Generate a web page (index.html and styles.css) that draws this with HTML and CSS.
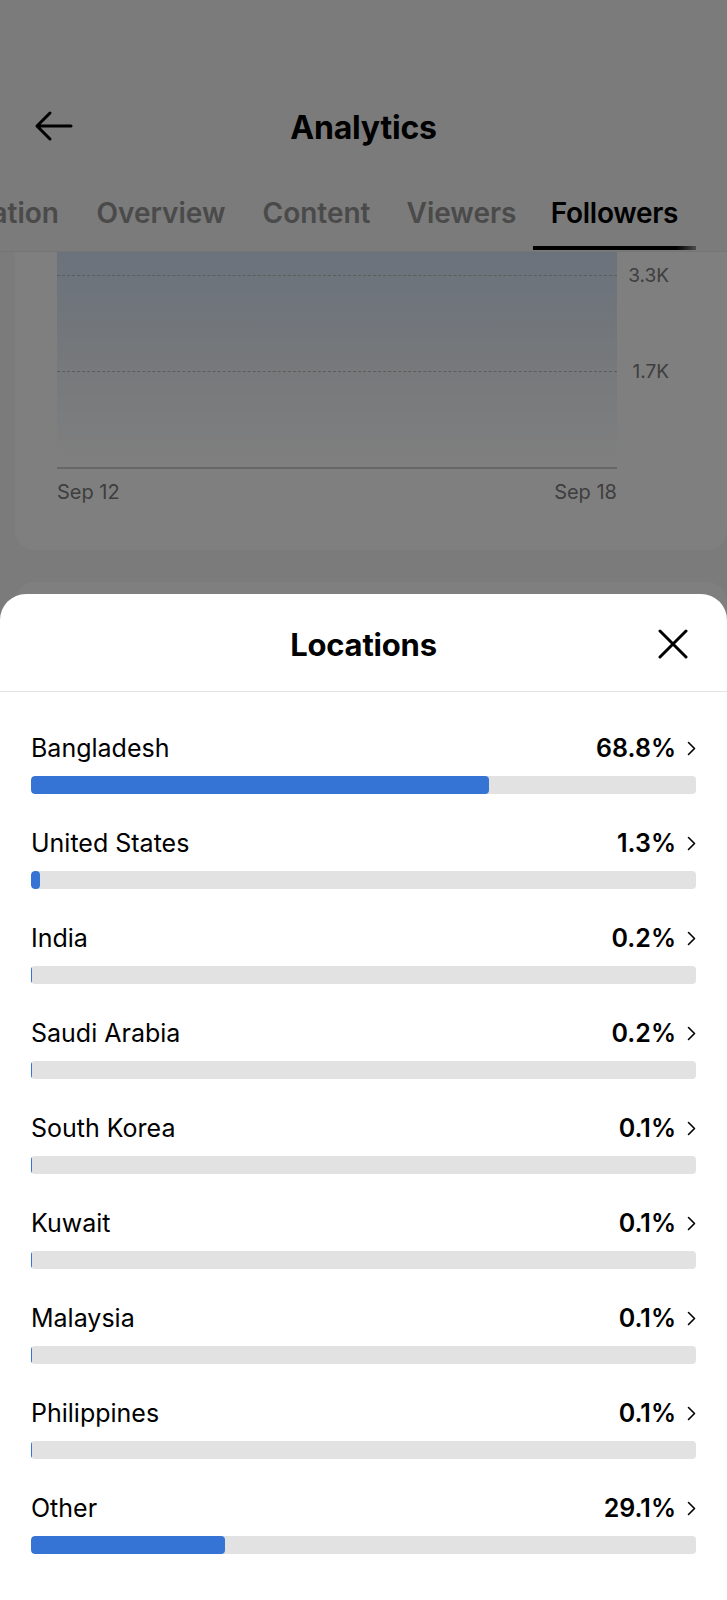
FILE: index.html
```html
<!DOCTYPE html>
<html lang="en">
<head>
  <meta charset="UTF-8" />
  <meta name="viewport" content="width=device-width, initial-scale=1.0" />
  <title>Analytics - Locations</title>
  <link rel="stylesheet" href="styles.css">
</head>
<body>
  <div class="page">
    <div class="status"></div>

    <header class="topbar">
      <svg class="back" width="40" height="32" viewBox="0 0 40 32" fill="none" stroke="#000" stroke-width="3" stroke-linecap="round" stroke-linejoin="round">
        <path d="M38 16H4M17 3L4 16l13 13" />
      </svg>
      <h1>Analytics</h1>
    </header>

    <nav class="tabs">
      <div class="tabs-inner">
        <a class="tab first">Inspiration</a>
        <a class="tab w-overview">Overview</a>
        <a class="tab w-content">Content</a>
        <a class="tab w-viewers">Viewers</a>
        <a class="tab w-followers active">Followers</a>
      </div>
    </nav>

    <section class="card chart-card">
      <div class="chart">
        <div class="plot">
          <div class="gridline g1"></div>
          <div class="gridline g2"></div>
        </div>
        <div class="y-axis">
          <span class="ylabel y1">3.3K</span>
          <span class="ylabel y2">1.7K</span>
        </div>
      </div>
      <div class="x-axis">
        <span>Sep 12</span>
        <span>Sep 18</span>
      </div>
    </section>

    <section class="card next-card"></section>
  </div>

  <div class="scrim"></div>

  <div class="sheet">
    <div class="sheet-head">
      <h2>Locations</h2>
      <svg class="close" width="30" height="30" viewBox="0 0 30 30" fill="none" stroke="#000" stroke-width="3" stroke-linecap="round">
        <path d="M2 2l26 26M28 2L2 28" />
      </svg>
    </div>

    <ul class="locations">
      <li class="loc">
        <div class="loc-row"><span class="name">Bangladesh</span><span class="pct">68.8%<svg class="chev" width="9" height="15" viewBox="0 0 9 15"><path d="M1.5 1.5l6 6-6 6" /></svg></span></div>
        <div class="track"><div class="fill" style="width: 68.8%"></div></div>
      </li>
      <li class="loc">
        <div class="loc-row"><span class="name">United States</span><span class="pct">1.3%<svg class="chev" width="9" height="15" viewBox="0 0 9 15"><path d="M1.5 1.5l6 6-6 6" /></svg></span></div>
        <div class="track"><div class="fill" style="width: 1.3%"></div></div>
      </li>
      <li class="loc">
        <div class="loc-row"><span class="name">India</span><span class="pct">0.2%<svg class="chev" width="9" height="15" viewBox="0 0 9 15"><path d="M1.5 1.5l6 6-6 6" /></svg></span></div>
        <div class="track"><div class="fill" style="width: 0.2%"></div></div>
      </li>
      <li class="loc">
        <div class="loc-row"><span class="name">Saudi Arabia</span><span class="pct">0.2%<svg class="chev" width="9" height="15" viewBox="0 0 9 15"><path d="M1.5 1.5l6 6-6 6" /></svg></span></div>
        <div class="track"><div class="fill" style="width: 0.2%"></div></div>
      </li>
      <li class="loc">
        <div class="loc-row"><span class="name">South Korea</span><span class="pct">0.1%<svg class="chev" width="9" height="15" viewBox="0 0 9 15"><path d="M1.5 1.5l6 6-6 6" /></svg></span></div>
        <div class="track"><div class="fill" style="width: 0.1%"></div></div>
      </li>
      <li class="loc">
        <div class="loc-row"><span class="name">Kuwait</span><span class="pct">0.1%<svg class="chev" width="9" height="15" viewBox="0 0 9 15"><path d="M1.5 1.5l6 6-6 6" /></svg></span></div>
        <div class="track"><div class="fill" style="width: 0.1%"></div></div>
      </li>
      <li class="loc">
        <div class="loc-row"><span class="name">Malaysia</span><span class="pct">0.1%<svg class="chev" width="9" height="15" viewBox="0 0 9 15"><path d="M1.5 1.5l6 6-6 6" /></svg></span></div>
        <div class="track"><div class="fill" style="width: 0.1%"></div></div>
      </li>
      <li class="loc">
        <div class="loc-row"><span class="name">Philippines</span><span class="pct">0.1%<svg class="chev" width="9" height="15" viewBox="0 0 9 15"><path d="M1.5 1.5l6 6-6 6" /></svg></span></div>
        <div class="track"><div class="fill" style="width: 0.1%"></div></div>
      </li>
      <li class="loc">
        <div class="loc-row"><span class="name">Other</span><span class="pct">29.1%<svg class="chev" width="9" height="15" viewBox="0 0 9 15"><path d="M1.5 1.5l6 6-6 6" /></svg></span></div>
        <div class="track"><div class="fill" style="width: 29.1%"></div></div>
      </li>
    </ul>
  </div>
</body>
</html>
```

FILE: styles.css
```css
:root {
  --bg: #f6f6f6;
  --card: #ffffff;
  --text: #000000;
  --muted: #949494;
  --blue: #3574d4;
  --track: #e2e2e2;
}

* {
  margin: 0;
  padding: 0;
  box-sizing: border-box;
}

body {
  width: 727px;
  height: 1600px;
  overflow: hidden;
  position: relative;
  font-family: 'Inter', 'Liberation Sans', sans-serif;
  color: var(--text);
  background: var(--bg);
}

.page {
  background: var(--bg);
  height: 100%;
}

.status {
  height: 80px;
}

/* Barre du haut */
.topbar {
  height: 92px;
  position: relative;
  display: flex;
  align-items: center;
  justify-content: center;
}

.topbar .back {
  position: absolute;
  left: 33px;
  top: 30px;
}

.topbar h1 {
  font-size: 32px;
  font-weight: 700;
  letter-spacing: -0.2px;
  padding-top: 2px;
}

/* Onglets */
.tabs {
  height: 80px;
  overflow: hidden;
  border-bottom: 1px solid #eaeaea;
}

.tabs-inner {
  display: flex;
  height: 100%;
  margin-left: -121px;
}

.tab {
  height: 100%;
  display: flex;
  align-items: center;
  justify-content: center;
  padding-top: 2px;
  font-size: 28px;
  font-weight: 600;
  color: var(--muted);
  white-space: nowrap;
  position: relative;
}

.tab.first { width: 200px; justify-content: flex-end; padding-right: 20px; }
.w-overview { width: 164px; }
.w-content { width: 147px; }
.w-viewers { width: 143px; }
.w-followers { width: 163px; letter-spacing: -0.3px; }

.tab.active {
  color: var(--text);
}

.tab.active::after {
  content: '';
  position: absolute;
  left: 0;
  right: 0;
  bottom: 1px;
  height: 4px;
  background: linear-gradient(to right, #000 88%, #9a9a9a 100%);
}

/* Cartes */
.card {
  background: var(--card);
  margin: 0 0 0 15px;
}

.chart-card {
  border-radius: 0 0 20px 20px;
  padding: 0 0 0 42px;
  height: 298px;
}

.chart {
  display: flex;
}

.plot {
  position: relative;
  width: 560px;
  height: 217px;
  background: linear-gradient(to bottom, #d6e5f8 0%, #eef2f7 55%, #ffffff 100%);
  border-bottom: 2px solid #cfcfcf;
}

.gridline {
  position: absolute;
  left: 0;
  right: 0;
  border-top: 1px dashed #b8b8b8;
}

.g1 { top: 23px; }
.g2 { top: 119px; }

.y-axis {
  position: relative;
  width: 52px;
}

.ylabel {
  position: absolute;
  right: 0;
  font-size: 19px;
  color: #7c7c7c;
  line-height: 24px;
}

.y1 { top: 12px; }
.y2 { top: 108px; }

.x-axis {
  width: 560px;
  display: flex;
  justify-content: space-between;
  margin-top: 11px;
  font-size: 20px;
  color: #7c7c7c;
}

.next-card {
  margin-top: 32px;
  height: 200px;
  border-radius: 20px;
}

/* Voile */
.scrim {
  position: absolute;
  inset: 0;
  background: rgba(0, 0, 0, 0.5);
}

/* Feuille des lieux */
.sheet {
  position: absolute;
  left: 0;
  right: 0;
  bottom: 0;
  height: 1006px;
  background: #fff;
  border-radius: 26px 26px 0 0;
}

.sheet-head {
  height: 98px;
  display: flex;
  align-items: center;
  justify-content: center;
  position: relative;
  border-bottom: 1px solid #e3e3e3;
}

.sheet-head h2 {
  font-size: 31px;
  font-weight: 700;
  letter-spacing: -0.2px;
  padding-top: 4px;
}

.sheet-head .close {
  position: absolute;
  right: 39px;
  top: 35px;
}

.locations {
  list-style: none;
  padding: 40px 31px 0 31px;
}

.loc {
  margin-bottom: 33px;
}

.loc-row {
  height: 32px;
  display: flex;
  align-items: center;
  justify-content: space-between;
}

.name {
  font-size: 25px;
  font-weight: 400;
}

.pct {
  font-size: 25px;
  font-weight: 600;
  display: flex;
  align-items: center;
  gap: 11px;
}

.chev path {
  fill: none;
  stroke: #000;
  stroke-width: 1.6;
  stroke-linecap: round;
  stroke-linejoin: round;
}

.track {
  margin-top: 12px;
  height: 18px;
  border-radius: 4px;
  background: var(--track);
  overflow: hidden;
}

.fill {
  height: 100%;
  min-width: 1px;
  background: var(--blue);
  border-radius: 4px;
}
```
